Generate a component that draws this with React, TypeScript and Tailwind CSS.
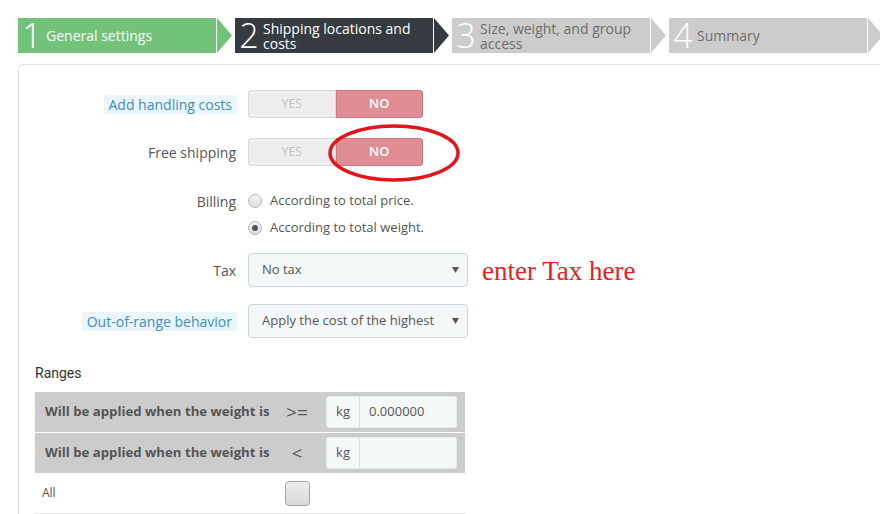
import type { ReactNode } from "react";

const steps = [
  { n: "1", label: ["General settings"], body: "bg-[#72c279]", text: "text-white", arrow: "#72c279" },
  { n: "2", label: ["Shipping locations and", "costs"], body: "bg-[#363a41]", text: "text-white", arrow: "#363a41" },
  { n: "3", label: ["Size, weight, and group", "access"], body: "bg-[#cccccc]", text: "text-[#6c6c6c]", arrow: "#cccccc" },
  { n: "4", label: ["Summary"], body: "bg-[#cccccc]", text: "text-[#6c6c6c]", arrow: "#cccccc" },
];

const StepBar = () => (
  <div className="flex ml-[18px] mt-[18px] h-[35px] gap-[2px]">
    {steps.map((s) => (
      <div key={s.n} className="flex h-full">
        <div className={`${s.body} w-[198px] h-full flex items-center pl-[4px]`}>
          <span className="text-white text-[34px] font-light leading-none w-[20px] text-center -mt-[2px]">{s.n}</span>
          <div className={`${s.text} ml-[4px] text-[14px] leading-[15px]`}>
            {s.label.map((l) => (
              <div key={l}>{l}</div>
            ))}
          </div>
        </div>
        <svg width="16" height="35" viewBox="0 0 16 35" className="ml-[1px]">
          <polygon points="0,0 15,17.5 0,35" fill={s.arrow} />
        </svg>
      </div>
    ))}
  </div>
);

const Label = ({ children, hint }: { children: ReactNode; hint?: boolean }) => (
  <div className="w-[218px] flex justify-end shrink-0">
    {hint ? (
      <span className="bg-[#eaf6fc] text-[#3d8ec2] text-[14px] leading-[19px] px-[5px] rounded-[3px]">{children}</span>
    ) : (
      <span className="text-[#555] text-[14px] leading-[19px] pr-[1px]">{children}</span>
    )}
  </div>
);

const Toggle = () => (
  <div className="ml-[11px] flex w-[175px] h-[28px] text-[12px]">
    <div className="flex-1 flex items-center justify-center bg-[#eeeeee] border border-[#dadada] rounded-l-[3px] text-[#c2c2c2]">
      YES
    </div>
    <div className="flex-1 flex items-center justify-center bg-[#e08e94] border border-[#cc7c82] rounded-r-[3px] text-white font-semibold text-[13px]">
      NO
    </div>
  </div>
);

const Select = ({ value }: { value: string }) => (
  <div className="ml-[11px] w-[220px] h-[34px] flex items-center justify-between border border-[#ccd8dc] bg-[#f5f8f9] rounded-[4px] pl-[13px] pr-[8px] text-[13px] text-[#555]">
    <span>{value}</span>
    <svg width="7" height="6" viewBox="0 0 7 6">
      <polygon points="0,0 7,0 3.5,6" fill="#555" />
    </svg>
  </div>
);

const Radio = ({ checked, label }: { checked?: boolean; label: string }) => (
  <div className="flex items-center h-[22px]">
    <span className="w-[14px] h-[14px] rounded-full border border-[#b5b5b5] bg-gradient-to-b from-[#f4f4f4] to-[#dedede] flex items-center justify-center">
      {checked && <span className="w-[6px] h-[6px] rounded-full bg-[#555]" />}
    </span>
    <span className="ml-[8px] text-[13px] text-[#555]">{label}</span>
  </div>
);

const RangeRow = ({ op, value }: { op: string; value: string }) => (
  <div className="grid grid-cols-[241px_42px_1fr] h-[40px] bg-[#cccccc] items-center">
    <span className="pl-[10px] text-[13.2px] font-bold text-[#555]">Will be applied when the weight is</span>
    <span className="text-center text-[19px] text-[#555] leading-none">{op}</span>
    <div className="pl-[8px] pr-[8px]">
      <div className="flex h-[32px] rounded-[3px] border border-[#e3ecef] bg-[#f5f8f9] text-[13px] text-[#555]">
        <span className="w-[33px] flex items-center justify-center border-r border-[#d7e2e6]">kg</span>
        <span className="flex items-center pl-[9px]">{value}</span>
      </div>
    </div>
  </div>
);

export default function App() {
  return (
    <div className="relative w-[880px] h-[514px] overflow-hidden bg-white font-['Open_Sans',sans-serif]">
      <StepBar />

      <div className="mt-[11px] ml-[18px] w-[870px] h-[600px] border border-[#e0e0e0] rounded-[5px] pt-[25px]">
        <div className="flex items-center h-[28px]">
          <Label hint>Add handling costs</Label>
          <Toggle />
        </div>

        <div className="flex items-center h-[28px] mt-[20px]">
          <Label>Free shipping</Label>
          <Toggle />
        </div>

        <div className="flex mt-[24px]">
          <div className="h-[22px] flex items-center">
            <Label>Billing</Label>
          </div>
          <div className="ml-[11px] flex flex-col gap-[5px]">
            <Radio label="According to total price." />
            <Radio checked label="According to total weight." />
          </div>
        </div>

        <div className="flex items-center mt-[14px]">
          <Label>Tax</Label>
          <Select value="No tax" />
          <span className="ml-[14px] font-['Liberation_Serif',serif] text-[27px] text-[#ea1c24] leading-none mt-[2px]">
            enter Tax here
          </span>
        </div>

        <div className="flex items-center mt-[17px]">
          <Label hint>Out-of-range behavior</Label>
          <Select value="Apply the cost of the highest" />
        </div>

        <div className="ml-[16px] w-[430px]">
          <div className="mt-[25px] h-[20px] flex items-center font-['Roboto',sans-serif] text-[14px] text-[#333]">
            Ranges
          </div>
          <div className="mt-[9px] flex flex-col gap-[1px]">
            <RangeRow op=">=" value="0.000000" />
            <RangeRow op="<" value="" />
          </div>
          <div className="grid grid-cols-[241px_42px_1fr] h-[41px] items-center border-b border-[#e6e6e6]">
            <span className="pl-[7px] text-[12px] text-[#555]">All</span>
            <span className="flex justify-center">
              <span className="w-[25px] h-[25px] rounded-[4px] border border-[#a3a3a3] bg-gradient-to-b from-[#eeeeee] to-[#d9d9d9]" />
            </span>
          </div>
        </div>
      </div>

      <svg className="absolute left-[327px] top-[123px]" width="134" height="60" viewBox="0 0 134 60">
        <ellipse cx="67" cy="30" rx="64" ry="27" fill="none" stroke="#e3141c" strokeWidth="3.5" />
      </svg>
    </div>
  );
}
